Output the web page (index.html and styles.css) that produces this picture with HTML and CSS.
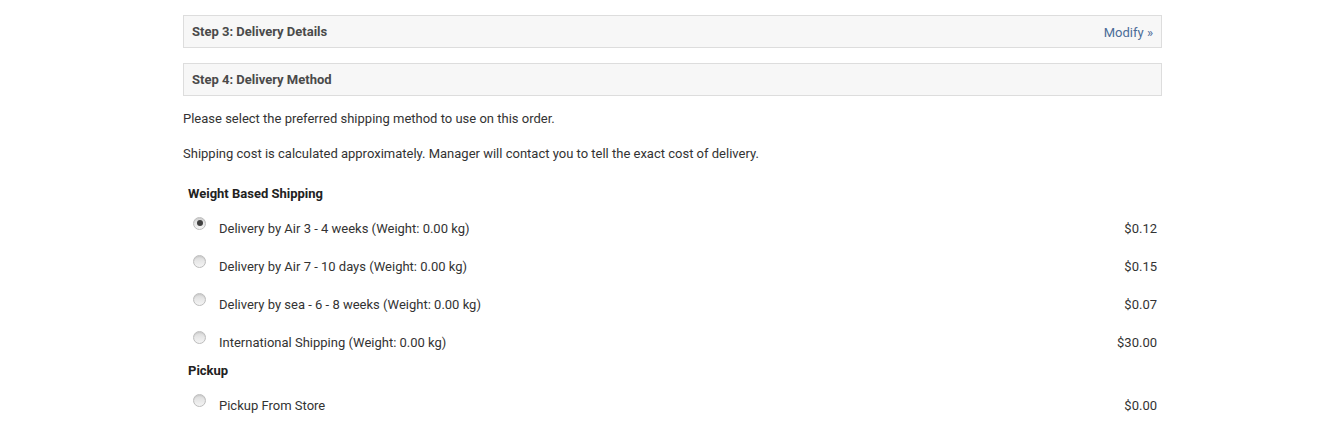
FILE: index.html
```html
<!DOCTYPE html>
<html>
<head>
<meta charset="utf-8">
<link rel="stylesheet" href="styles.css">
</head>
<body>
<div class="checkout">
  <div class="panel-heading">
    <span class="panel-title">Step 3: Delivery Details</span>
    <a class="modify" href="#">Modify &raquo;</a>
  </div>
  <div class="panel-heading">
    <span class="panel-title">Step 4: Delivery Method</span>
  </div>
  <div class="panel-body">
    <p class="intro">Please select the preferred shipping method to use on this order.</p>
    <p class="intro">Shipping cost is calculated approximately. Manager will contact you to tell the exact cost of delivery.</p>

    <div class="group-title">Weight Based Shipping</div>
    <div class="method-row">
      <span class="radio checked"></span>
      <span class="method-name">Delivery by Air 3 - 4 weeks (Weight: 0.00 kg)</span>
      <span class="price">$0.12</span>
    </div>
    <div class="method-row">
      <span class="radio"></span>
      <span class="method-name">Delivery by Air 7 - 10 days (Weight: 0.00 kg)</span>
      <span class="price">$0.15</span>
    </div>
    <div class="method-row">
      <span class="radio"></span>
      <span class="method-name">Delivery by sea - 6 - 8 weeks (Weight: 0.00 kg)</span>
      <span class="price">$0.07</span>
    </div>
    <div class="method-row">
      <span class="radio"></span>
      <span class="method-name">International Shipping (Weight: 0.00 kg)</span>
      <span class="price">$30.00</span>
    </div>

    <div class="group-title">Pickup</div>
    <div class="method-row">
      <span class="radio"></span>
      <span class="method-name">Pickup From Store</span>
      <span class="price">$0.00</span>
    </div>
  </div>
</div>
</body>
</html>
```

FILE: styles.css
```css
html, body {
  margin: 0;
  padding: 0;
  background: #ffffff;
}

body {
  font-family: Roboto, "Liberation Sans", Arial, sans-serif;
  font-size: 13px;
  color: #333333;
}

.checkout {
  width: 979px;
  margin-left: 183px;
  padding-top: 15px;
}

.panel-heading {
  display: flex;
  justify-content: space-between;
  align-items: center;
  height: 31px;
  padding: 0 8px 0 8px;
  background: #f7f7f7;
  border: 1px solid #dddddd;
  margin-bottom: 15px;
}

.panel-heading + .panel-heading {
  margin-bottom: 0;
}

.panel-title {
  font-weight: bold;
  font-size: 13px;
  color: #4a4a4a;
}

.modify {
  color: #4a6c97;
  text-decoration: none;
  font-size: 13px;
  margin-top: 2px;
}

.panel-body {
  padding-top: 14px;
}

.intro {
  margin: 0 0 17px 0;
  line-height: 18px;
}

.intro + .intro {
  margin-bottom: 22px;
}

.group-title {
  font-weight: bold;
  color: #222222;
  line-height: 18px;
  margin-left: 5px;
  margin-bottom: 7px;
}

.method-row {
  display: flex;
  align-items: center;
  height: 38px;
  padding: 0 5px 0 10px;
}

.radio {
  width: 11px;
  height: 11px;
  border-radius: 50%;
  border: 1px solid #bdbdbd;
  background: linear-gradient(to bottom, #d9d9d9 0%, #e8e8e8 50%, #f4f4f4 100%);
  box-shadow: inset 0 1px 1px rgba(0, 0, 0, 0.08);
  margin-bottom: 12px;
  flex: none;
  display: flex;
  align-items: center;
  justify-content: center;
  box-sizing: content-box;
}

.radio.checked::after {
  content: "";
  width: 6px;
  height: 6px;
  border-radius: 50%;
  background: #404040;
}

.method-name {
  margin-left: 13px;
  flex: 1;
  line-height: 18px;
}

.price {
  line-height: 18px;
}
```
